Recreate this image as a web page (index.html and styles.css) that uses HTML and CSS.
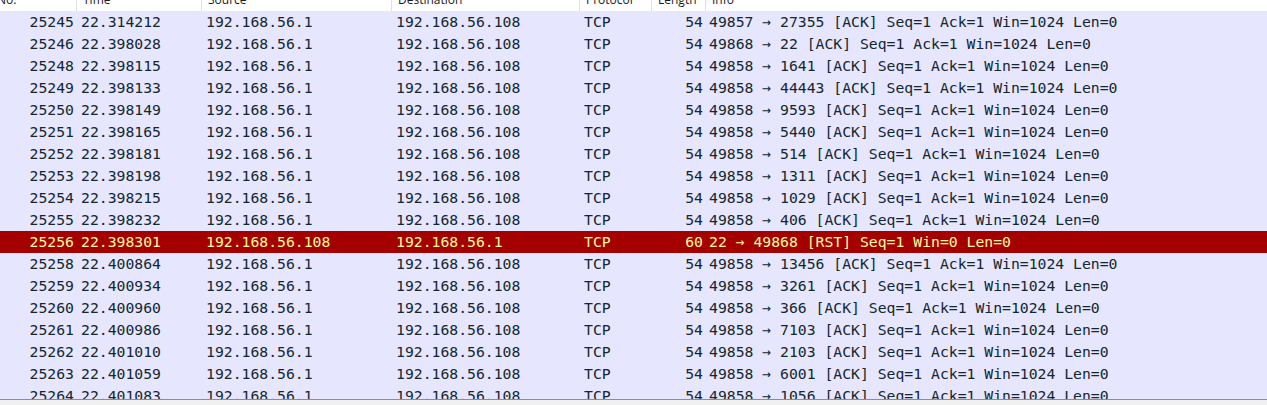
FILE: index.html
```html
<!DOCTYPE html>
<html>
<head>
<meta charset="utf-8">
<link rel="stylesheet" href="styles.css">
</head>
<body>
<div class="view">
  <div class="hdr">
    <div class="hdr-inner cols">
      <div class="hc hc-no">No.</div>
      <div class="hc">Time</div>
      <div class="hc">Source</div>
      <div class="hc">Destination</div>
      <div class="hc">Protocol</div>
      <div class="hc">Length</div>
      <div class="hc hc-last">Info</div>
    </div>
  </div>
  <div class="rows">
    <div class="row cols"><span class="r">25245</span><span>22.314212</span><span>192.168.56.1</span><span>192.168.56.108</span><span>TCP</span><span class="r">54</span><span class="info">49857 → 27355 [ACK] Seq=1 Ack=1 Win=1024 Len=0</span></div>
    <div class="row cols"><span class="r">25246</span><span>22.398028</span><span>192.168.56.1</span><span>192.168.56.108</span><span>TCP</span><span class="r">54</span><span class="info">49868 → 22 [ACK] Seq=1 Ack=1 Win=1024 Len=0</span></div>
    <div class="row cols"><span class="r">25248</span><span>22.398115</span><span>192.168.56.1</span><span>192.168.56.108</span><span>TCP</span><span class="r">54</span><span class="info">49858 → 1641 [ACK] Seq=1 Ack=1 Win=1024 Len=0</span></div>
    <div class="row cols"><span class="r">25249</span><span>22.398133</span><span>192.168.56.1</span><span>192.168.56.108</span><span>TCP</span><span class="r">54</span><span class="info">49858 → 44443 [ACK] Seq=1 Ack=1 Win=1024 Len=0</span></div>
    <div class="row cols"><span class="r">25250</span><span>22.398149</span><span>192.168.56.1</span><span>192.168.56.108</span><span>TCP</span><span class="r">54</span><span class="info">49858 → 9593 [ACK] Seq=1 Ack=1 Win=1024 Len=0</span></div>
    <div class="row cols"><span class="r">25251</span><span>22.398165</span><span>192.168.56.1</span><span>192.168.56.108</span><span>TCP</span><span class="r">54</span><span class="info">49858 → 5440 [ACK] Seq=1 Ack=1 Win=1024 Len=0</span></div>
    <div class="row cols"><span class="r">25252</span><span>22.398181</span><span>192.168.56.1</span><span>192.168.56.108</span><span>TCP</span><span class="r">54</span><span class="info">49858 → 514 [ACK] Seq=1 Ack=1 Win=1024 Len=0</span></div>
    <div class="row cols"><span class="r">25253</span><span>22.398198</span><span>192.168.56.1</span><span>192.168.56.108</span><span>TCP</span><span class="r">54</span><span class="info">49858 → 1311 [ACK] Seq=1 Ack=1 Win=1024 Len=0</span></div>
    <div class="row cols"><span class="r">25254</span><span>22.398215</span><span>192.168.56.1</span><span>192.168.56.108</span><span>TCP</span><span class="r">54</span><span class="info">49858 → 1029 [ACK] Seq=1 Ack=1 Win=1024 Len=0</span></div>
    <div class="row cols"><span class="r">25255</span><span>22.398232</span><span>192.168.56.1</span><span>192.168.56.108</span><span>TCP</span><span class="r">54</span><span class="info">49858 → 406 [ACK] Seq=1 Ack=1 Win=1024 Len=0</span></div>
    <div class="row cols bad"><span class="r">25256</span><span>22.398301</span><span>192.168.56.108</span><span>192.168.56.1</span><span>TCP</span><span class="r">60</span><span class="info">22 → 49868 [RST] Seq=1 Win=0 Len=0</span></div>
    <div class="row cols"><span class="r">25258</span><span>22.400864</span><span>192.168.56.1</span><span>192.168.56.108</span><span>TCP</span><span class="r">54</span><span class="info">49858 → 13456 [ACK] Seq=1 Ack=1 Win=1024 Len=0</span></div>
    <div class="row cols"><span class="r">25259</span><span>22.400934</span><span>192.168.56.1</span><span>192.168.56.108</span><span>TCP</span><span class="r">54</span><span class="info">49858 → 3261 [ACK] Seq=1 Ack=1 Win=1024 Len=0</span></div>
    <div class="row cols"><span class="r">25260</span><span>22.400960</span><span>192.168.56.1</span><span>192.168.56.108</span><span>TCP</span><span class="r">54</span><span class="info">49858 → 366 [ACK] Seq=1 Ack=1 Win=1024 Len=0</span></div>
    <div class="row cols"><span class="r">25261</span><span>22.400986</span><span>192.168.56.1</span><span>192.168.56.108</span><span>TCP</span><span class="r">54</span><span class="info">49858 → 7103 [ACK] Seq=1 Ack=1 Win=1024 Len=0</span></div>
    <div class="row cols"><span class="r">25262</span><span>22.401010</span><span>192.168.56.1</span><span>192.168.56.108</span><span>TCP</span><span class="r">54</span><span class="info">49858 → 2103 [ACK] Seq=1 Ack=1 Win=1024 Len=0</span></div>
    <div class="row cols"><span class="r">25263</span><span>22.401059</span><span>192.168.56.1</span><span>192.168.56.108</span><span>TCP</span><span class="r">54</span><span class="info">49858 → 6001 [ACK] Seq=1 Ack=1 Win=1024 Len=0</span></div>
    <div class="row cols"><span class="r">25264</span><span>22.401083</span><span>192.168.56.1</span><span>192.168.56.108</span><span>TCP</span><span class="r">54</span><span class="info">49858 → 1056 [ACK] Seq=1 Ack=1 Win=1024 Len=0</span></div>
  </div>
  <div class="hscroll"></div>
</div>
</body>
</html>
```

FILE: styles.css
```css
html, body {
  margin: 0;
  padding: 0;
  background: #ffffff;
  overflow: hidden;
}

.view {
  width: 1267px;
  height: 405px;
  display: flex;
  flex-direction: column;
  overflow: hidden;
}

.cols {
  display: grid;
  grid-template-columns: 77px 125px 190px 188px 72px 54px 1fr;
}

.hdr {
  height: 11px;
  flex: none;
  overflow: hidden;
  background: #ffffff;
}

.hdr-inner {
  height: 22px;
  margin-top: -11px;
  font-family: "Open Sans", "Noto Sans", sans-serif;
  font-size: 12px;
  line-height: 22px;
  color: #1a1a1a;
}

.hc {
  padding-left: 6px;
  border-right: 1px solid #e3e3e3;
  white-space: nowrap;
  overflow: hidden;
}

.hc-no {
  text-indent: -9px;
}

.hc-last {
  border-right: none;
}

.rows {
  flex: 1;
  overflow: hidden;
  background: #e7e6ff;
}

.row {
  height: 22px;
  line-height: 22px;
  font-family: "DejaVu Sans Mono", monospace;
  font-size: 14.75px;
  color: #12272e;
  background: #e7e6ff;
  white-space: nowrap;
}

.row span {
  padding: 0 4px;
  overflow: hidden;
}

.row span.r {
  text-align: right;
  padding-right: 3px;
}

.row span.info {
  padding-left: 3px;
}

.row.bad {
  background: #a40000;
  color: #fffc9c;
}

.hscroll {
  height: 6px;
  flex: none;
  box-sizing: border-box;
  border-top: 1px solid #8c8c96;
  background: #f0f0f0;
}
```
